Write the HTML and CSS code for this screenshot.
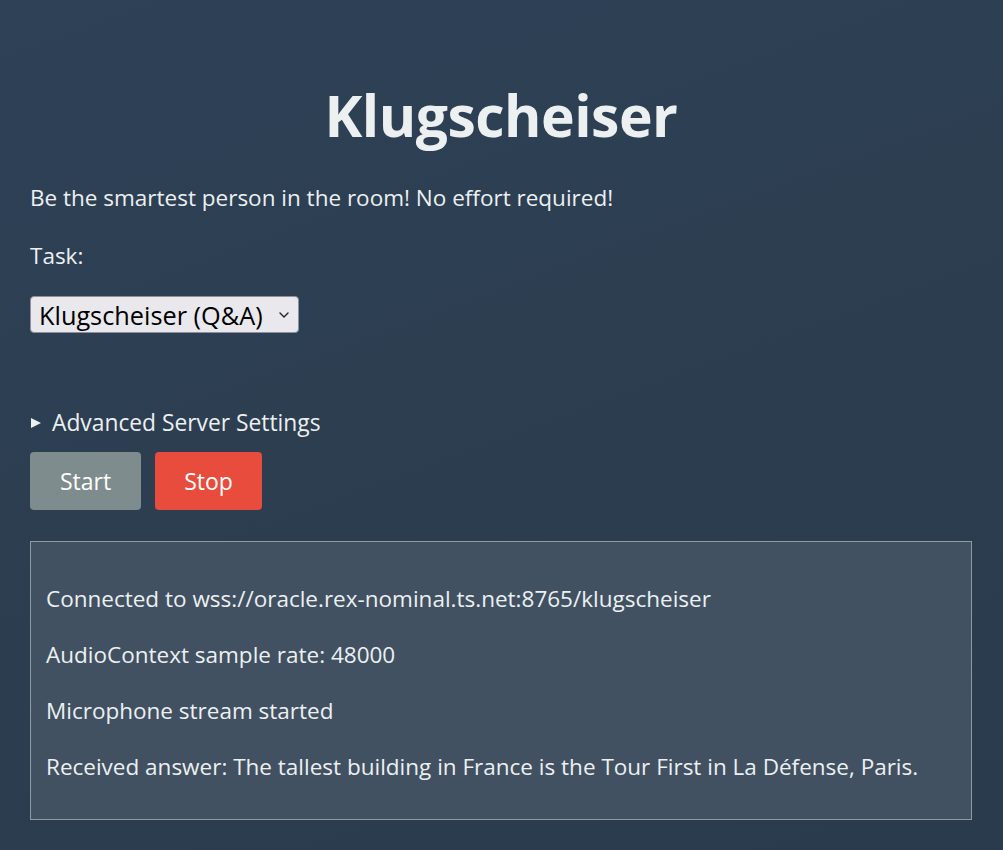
FILE: index.html
```html
<!DOCTYPE html>
<html lang="en">
<head>
<meta charset="utf-8">
<title>Klugscheiser</title>
<link rel="stylesheet" href="styles.css">
</head>
<body>
<main class="page">
  <h1 class="title">Klugscheiser</h1>
  <p class="tagline">Be the smartest person in the room! No effort required!</p>
  <label class="task-label" for="task">Task:</label>
  <div class="select-row">
    <div class="select-wrap">
      <select id="task" class="task-select">
        <option>Klugscheiser (Q&amp;A)</option>
      </select>
      <svg class="select-chevron" width="10" height="6" viewBox="0 0 10 6" aria-hidden="true">
        <path d="M1 1 L5 5 L9 1" fill="none" stroke="#222" stroke-width="1.4" stroke-linecap="round" stroke-linejoin="round"/>
      </svg>
    </div>
  </div>
  <details class="advanced">
    <summary class="advanced-summary">Advanced Server Settings</summary>
  </details>
  <div class="actions">
    <button class="btn btn-start">Start</button>
    <button class="btn btn-stop">Stop</button>
  </div>
  <section class="log">
    <p class="log-line">Connected to wss://oracle.rex-nominal.ts.net:8765/klugscheiser</p>
    <p class="log-line">AudioContext sample rate: 48000</p>
    <p class="log-line">Microphone stream started</p>
    <p class="log-line">Received answer: The tallest building in France is the Tour First in La Défense, Paris.</p>
  </section>
</main>
</body>
</html>
```

FILE: styles.css
```css
html, body {
  margin: 0;
  padding: 0;
  height: 100%;
}
body {
  background: linear-gradient(160deg, #2f4157 0%, #2c3e50 45%, #2a3b4e 100%);
  color: #ecf0f1;
  font-family: "Segoe UI", "Open Sans", "Noto Sans", sans-serif;
  font-size: 22.5px;
  line-height: 28px;
}
.page {
  padding: 0 31px 0 30px;
  display: flex;
  flex-direction: column;
  align-items: stretch;
}
.title {
  margin: 79px 0 0;
  font-size: 57px;
  line-height: 72px;
  font-weight: 700;
  text-align: center;
  color: #ecf0f1;
  letter-spacing: -0.5px;
}
.tagline {
  margin: 33px 0 0;
}
.task-label {
  margin-top: 30px;
}
.select-row {
  margin-top: 26px;
  display: flex;
}
.select-wrap {
  position: relative;
  display: flex;
}
.task-select {
  appearance: none;
  -webkit-appearance: none;
  height: 37px;
  width: 269px;
  font-family: inherit;
  font-size: 25.3px;
  color: #000;
  background: #e9e8ed;
  border: 1px solid #8f8f9d;
  border-radius: 4px;
  padding: 0 0 0 8px;
}
.select-chevron {
  position: absolute;
  right: 10px;
  top: 16px;
  pointer-events: none;
}
.advanced {
  margin-top: 76px;
}
.advanced-summary {
  cursor: pointer;
  list-style: none;
  display: flex;
  align-items: center;
  font-size: 22.8px;
}
.advanced-summary::before {
  content: "";
  width: 0;
  height: 0;
  border-left: 10px solid #ecf0f1;
  border-top: 5px solid transparent;
  border-bottom: 5px solid transparent;
  margin: 0 11px 0 1px;
}
.advanced-summary::-webkit-details-marker {
  display: none;
}
.actions {
  margin-top: 15px;
  display: flex;
  gap: 14px;
}
.btn {
  height: 58px;
  border: none;
  border-radius: 4px;
  color: #fff;
  font-family: inherit;
  font-size: 23px;
  padding: 0 29px;
  cursor: pointer;
}
.btn-start {
  background: #7f8c8d;
  padding: 0 30px;
}
.btn-stop {
  background: #e74c3c;
}
.log {
  margin-top: 31px;
  height: 279px;
  box-sizing: border-box;
  border: 1px solid #8e9ba3;
  background: #415162;
  padding: 43px 15px 0;
  display: flex;
  flex-direction: column;
  gap: 28px;
}
.log-line {
  margin: 0;
}
```
